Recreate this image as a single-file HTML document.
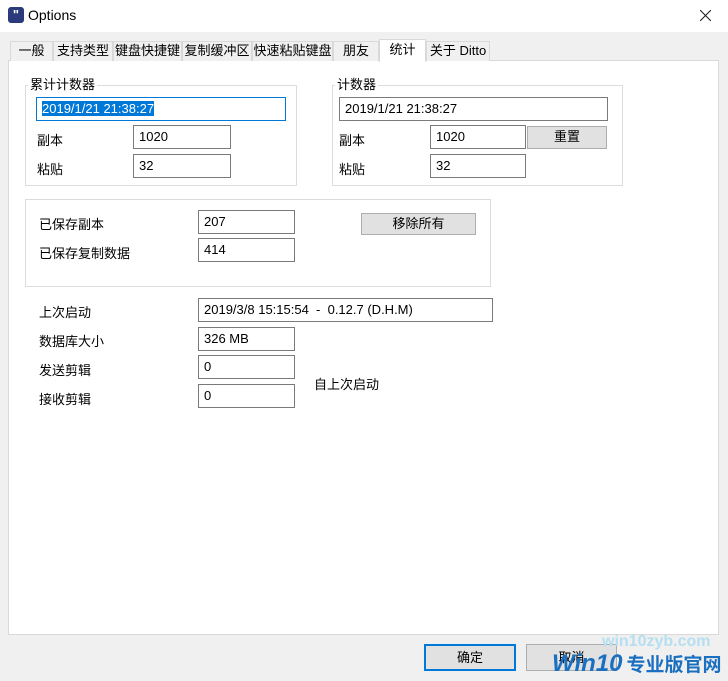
<!DOCTYPE html><html><head><meta charset="utf-8"><style>
*{box-sizing:border-box;margin:0;padding:0}
body{width:728px;height:681px;background:#f0f0f0;font-family:"Liberation Sans","Noto Sans CJK SC","Microsoft YaHei",sans-serif;font-size:13px;color:#000;position:relative;overflow:hidden}
.a{position:absolute;white-space:nowrap}
.title{left:0;top:0;width:728px;height:32px;background:#fff}
.inp{position:absolute;background:#fff;border:1px solid #7a7a7a;padding:1px 0 0 5px;height:24px;line-height:19px}
.grp{position:absolute;border:1px solid #dcdcdc}
.lbl{position:absolute;background:#fff;padding:0 2px;line-height:14px}
.btn{position:absolute;background:#e1e1e1;border:1px solid #adadad;text-align:center;line-height:20px}
.tab{position:absolute;top:41px;height:20px;background:#f0f0f0;border:1px solid #d9d9d9;border-bottom:none;line-height:18px;text-align:center}
</style></head><body>
<div class="a title"></div>
<div class="a" style="left:8px;top:7px;width:16px;height:16px;background:#2b3a7a;border-radius:3px;color:#fff;font-size:13px;font-weight:bold;line-height:15px;text-align:center">"</div>
<div class="a" style="left:28px;top:7px;font-size:14px">Options</div>
<svg class="a" style="left:700px;top:10px" width="11" height="11"><path d="M0 0L11 11M11 0L0 11" stroke="#222" stroke-width="1.1"/></svg>
<div class="a" style="left:8px;top:60px;width:711px;height:575px;background:#fff;border:1px solid #d9d9d9"></div>
<div class="tab" style="left:10px;width:43px">一般</div>
<div class="tab" style="left:53px;width:60px">支持类型</div>
<div class="tab" style="left:113px;width:69px">键盘快捷键</div>
<div class="tab" style="left:182px;width:70px">复制缓冲区</div>
<div class="tab" style="left:252px;width:81px">快速粘贴键盘</div>
<div class="tab" style="left:333px;width:46px">朋友</div>
<div class="tab" style="left:379px;width:47px;top:39px;height:23px;background:#fff;line-height:20px">统计</div>
<div class="tab" style="left:426px;width:64px">关于 Ditto</div>

<div class="grp" style="left:25px;top:85px;width:272px;height:101px"></div>
<div class="lbl" style="left:28px;top:78px">累计计数器</div>
<div class="inp" style="left:36px;top:97px;width:250px;border-color:#0078d7"><span style="background:#0078d7;color:#fff">2019/1/21 21:38:27</span></div>
<div class="a" style="left:37px;top:130px">副本</div>
<div class="inp" style="left:133px;top:125px;width:98px">1020</div>
<div class="a" style="left:37px;top:159px">粘贴</div>
<div class="inp" style="left:133px;top:154px;width:98px">32</div>

<div class="grp" style="left:332px;top:85px;width:291px;height:101px"></div>
<div class="lbl" style="left:335px;top:78px">计数器</div>
<div class="inp" style="left:339px;top:97px;width:269px">2019/1/21 21:38:27</div>
<div class="a" style="left:339px;top:130px">副本</div>
<div class="inp" style="left:430px;top:125px;width:96px">1020</div>
<div class="btn" style="left:527px;top:126px;width:80px;height:23px">重置</div>
<div class="a" style="left:339px;top:159px">粘贴</div>
<div class="inp" style="left:430px;top:154px;width:96px">32</div>

<div class="grp" style="left:25px;top:199px;width:466px;height:88px"></div>
<div class="a" style="left:39px;top:214px">已保存副本</div>
<div class="inp" style="left:198px;top:210px;width:97px">207</div>
<div class="a" style="left:39px;top:243px">已保存复制数据</div>
<div class="inp" style="left:198px;top:238px;width:97px">414</div>
<div class="btn" style="left:361px;top:213px;width:115px;height:22px">移除所有</div>

<div class="a" style="left:39px;top:302px">上次启动</div>
<div class="inp" style="left:198px;top:298px;width:295px">2019/3/8 15:15:54&nbsp; - &nbsp;0.12.7 (D.H.M)</div>
<div class="a" style="left:39px;top:331px">数据库大小</div>
<div class="inp" style="left:198px;top:327px;width:97px">326 MB</div>
<div class="a" style="left:39px;top:360px">发送剪辑</div>
<div class="inp" style="left:198px;top:355px;width:97px">0</div>
<div class="a" style="left:39px;top:389px">接收剪辑</div>
<div class="inp" style="left:198px;top:384px;width:97px">0</div>
<div class="a" style="left:314px;top:374px">自上次启动</div>

<div class="btn" style="left:424px;top:644px;width:92px;height:27px;border:2px solid #0078d7;line-height:23px">确定</div>
<div class="btn" style="left:526px;top:644px;width:91px;height:27px;line-height:25px">取消</div>
<div class="a" style="left:602px;top:633px;font-size:16px;font-weight:bold;color:#b5dff0">win10zyb.com</div>
<div class="a" style="left:552px;top:650px;font-size:24px;line-height:28px;font-weight:bold;font-style:italic;color:#1a6fc0">Win10<span style="font-style:normal;font-size:19px;margin-left:4px">专业版官网</span></div>
</body></html>
